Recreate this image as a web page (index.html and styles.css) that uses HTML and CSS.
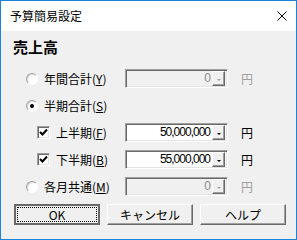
FILE: index.html
```html
<!DOCTYPE html>
<html lang="ja">
<head>
  <meta charset="UTF-8" />
  <title>予算簡易設定</title>
  <link rel="stylesheet" href="styles.css">
</head>
<body>

  <div class="window">
    <!-- Title bar -->
    <div class="titlebar">
      <span class="title">予算簡易設定</span>
      <svg class="close" width="10" height="10" viewBox="0 0 10 10">
        <path d="M0.5 0.5 L9.5 9.5 M9.5 0.5 L0.5 9.5" stroke="#000" stroke-width="1" fill="none"/>
      </svg>
    </div>

    <div class="content">
      <h2 class="heading">売上高</h2>

      <div class="row">
        <div class="label radio-label">
          <span class="radio"></span>
          <span>年間合計(<u>Y</u>)</span>
        </div>
        <div class="field disabled">
          <span class="value">0</span>
          <span class="drop"><i></i></span>
        </div>
        <span class="unit disabled-text">円</span>
      </div>

      <div class="row">
        <div class="label radio-label">
          <span class="radio checked"></span>
          <span>半期合計(<u>S</u>)</span>
        </div>
      </div>

      <div class="row">
        <div class="label check-label">
          <span class="check">
            <svg width="9" height="9" viewBox="0 0 9 9"><path d="M1 4 L3.5 6.5 L8 1.5" stroke="#000" stroke-width="2" fill="none"/></svg>
          </span>
          <span>上半期(<u>F</u>)</span>
        </div>
        <div class="field">
          <span class="value">50,000,000</span>
          <span class="drop"><i></i></span>
        </div>
        <span class="unit">円</span>
      </div>

      <div class="row">
        <div class="label check-label">
          <span class="check">
            <svg width="9" height="9" viewBox="0 0 9 9"><path d="M1 4 L3.5 6.5 L8 1.5" stroke="#000" stroke-width="2" fill="none"/></svg>
          </span>
          <span>下半期(<u>B</u>)</span>
        </div>
        <div class="field">
          <span class="value">55,000,000</span>
          <span class="drop"><i></i></span>
        </div>
        <span class="unit">円</span>
      </div>

      <div class="row">
        <div class="label radio-label">
          <span class="radio"></span>
          <span>各月共通(<u>M</u>)</span>
        </div>
        <div class="field disabled">
          <span class="value">0</span>
          <span class="drop"><i></i></span>
        </div>
        <span class="unit disabled-text">円</span>
      </div>

      <!-- Buttons -->
      <div class="buttons">
        <button class="btn default"><span class="focus">OK</span></button>
        <button class="btn">キャンセル</button>
        <button class="btn">ヘルプ</button>
      </div>
    </div>
  </div>

</body>
</html>
```

FILE: styles.css
```css
html, body {
  margin: 0;
  padding: 0;
}

body {
  width: 297px;
  height: 240px;
  font-family: "Noto Sans CJK JP", "Liberation Sans", sans-serif;
  font-size: 12px;
  color: #000;
}

.window {
  box-sizing: border-box;
  width: 297px;
  height: 240px;
  border: 1px solid #1883d7;
  background: #f0f0f0;
  display: flex;
  flex-direction: column;
}

.titlebar {
  height: 30px;
  background: #fff;
  display: flex;
  align-items: center;
  justify-content: space-between;
  padding: 0 9px 0 9px;
}

.title {
  font-size: 12px;
  line-height: 14px;
}

.close {
  display: block;
  margin-top: -1px;
}

.content {
  padding: 7px 0 0 12px;
}

.heading {
  margin: 0 0 13px 0;
  font-size: 15px;
  line-height: 18px;
  font-weight: bold;
}

.row {
  display: flex;
  align-items: center;
  height: 19px;
  margin-bottom: 8px;
}

.label {
  width: 111px;
  display: flex;
  align-items: center;
  gap: 6px;
  line-height: 14px;
}

.label u {
  text-decoration-thickness: 1px;
  text-underline-offset: 1px;
}

.radio-label {
  padding-left: 13px;
  box-sizing: border-box;
}

.check-label {
  padding-left: 24px;
  box-sizing: border-box;
}

.radio {
  box-sizing: border-box;
  width: 12px;
  height: 12px;
  border-radius: 50%;
  background: #fff;
  border: 1px solid;
  border-color: #a0a0a0 #fff #fff #a0a0a0;
  box-shadow: inset 1px 1px 0 #dcdcdc;
  position: relative;
  flex: none;
}

.radio.checked::after {
  content: "";
  position: absolute;
  left: 3px;
  top: 3px;
  width: 4px;
  height: 4px;
  border-radius: 50%;
  background: #000;
}

.check {
  box-sizing: border-box;
  width: 13px;
  height: 13px;
  background: #fff;
  border: 1px solid;
  border-color: #a0a0a0 #fff #fff #a0a0a0;
  box-shadow: inset 1px 1px 0 #696969, inset -1px -1px 0 #e3e3e3;
  display: flex;
  align-items: center;
  justify-content: center;
  flex: none;
}

.check svg {
  display: block;
}

.field {
  box-sizing: border-box;
  width: 103px;
  height: 19px;
  margin-left: 1px;
  background: #fff;
  border: 1px solid;
  border-color: #a0a0a0 #fff #fff #a0a0a0;
  box-shadow: inset 1px 1px 0 #696969, inset -1px -1px 0 #e3e3e3;
  display: flex;
  align-items: center;
  justify-content: flex-end;
  padding: 1px 2px 1px 1px;
}

.field.disabled {
  background: #f0f0f0;
}

.value {
  font-family: "Liberation Sans", sans-serif;
  font-size: 12px;
  letter-spacing: -1px;
  padding-right: 2px;
  line-height: 13px;
}

.disabled .value {
  color: #8d8d8d;
}

.drop {
  box-sizing: border-box;
  width: 13px;
  height: 15px;
  background: #f0f0f0;
  border: 1px solid;
  border-color: #fff #696969 #696969 #fff;
  box-shadow: inset -1px -1px 0 #a0a0a0;
  display: flex;
  align-items: center;
  justify-content: center;
  flex: none;
}

.drop i {
  width: 0;
  height: 0;
  border-left: 2px solid transparent;
  border-right: 2px solid transparent;
  border-top: 2px solid #000;
  margin-top: 2px;
}

.disabled .drop i {
  border-top-color: #a0a0a0;
}

.unit {
  margin-left: 13px;
  font-size: 12px;
}

.disabled-text {
  color: #a0a0a0;
}

.buttons {
  display: flex;
  gap: 7px;
  margin-top: 6px;
  padding-left: 1px;
}

.btn {
  box-sizing: border-box;
  width: 86px;
  height: 21px;
  padding: 0;
  font-family: "Noto Sans CJK JP", sans-serif;
  font-size: 12px;
  color: #000;
  background: #f0f0f0;
  border: 1px solid;
  border-color: #fff #696969 #696969 #fff;
  box-shadow: inset -1px -1px 0 #a0a0a0;
  display: flex;
  align-items: center;
  justify-content: center;
}

.btn.default {
  border: 2px solid #696969;
  box-shadow: none;
  padding: 1px;
}

.focus {
  box-sizing: border-box;
  width: 100%;
  height: 100%;
  border: 1px dotted #000;
  display: flex;
  align-items: center;
  justify-content: center;
  line-height: 13px;
}
```
